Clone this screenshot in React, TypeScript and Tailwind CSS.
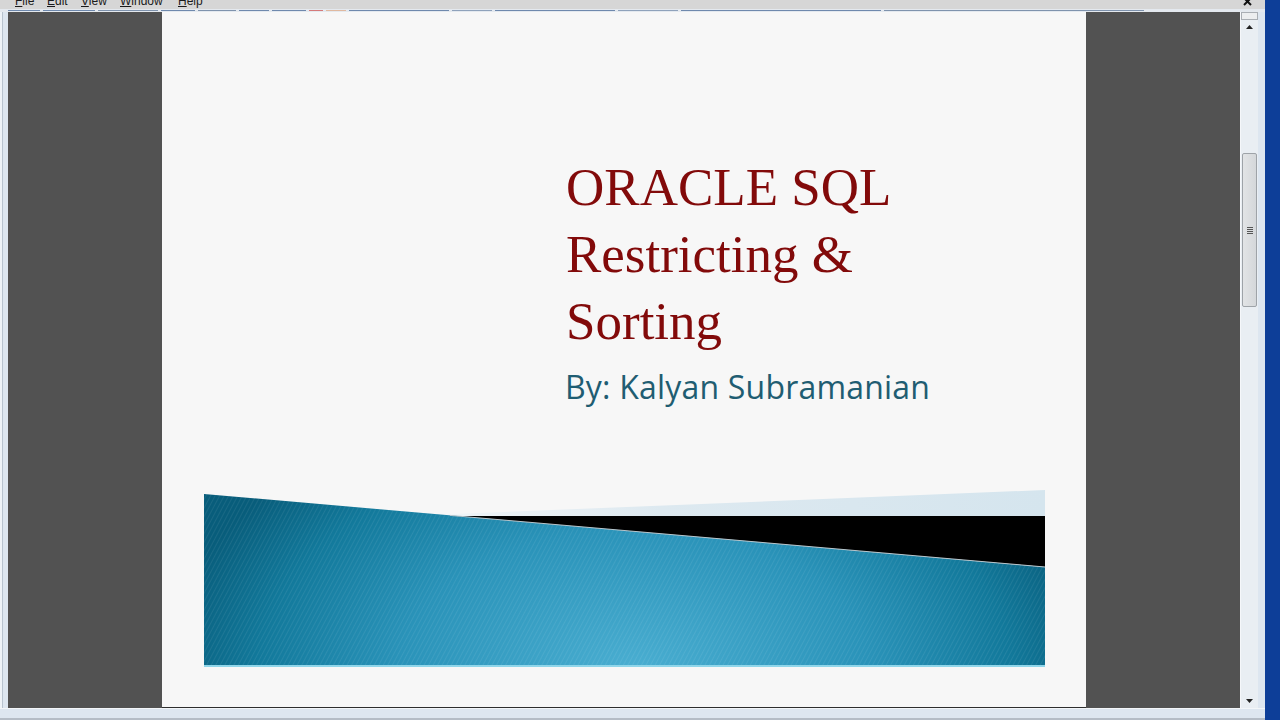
import React from "react";

function Banner() {
  return (
    <svg width="841" height="177" viewBox="0 0 841 177" className="block">
      <defs>
        <radialGradient
          id="teal"
          gradientUnits="userSpaceOnUse"
          cx="430"
          cy="180"
          r="470"
          gradientTransform="translate(430 180) scale(1 0.6) translate(-430 -180)"
        >
          <stop offset="0" stopColor="#4aaed1" />
          <stop offset="0.5" stopColor="#2a93b9" />
          <stop offset="0.8" stopColor="#12799b" />
          <stop offset="1" stopColor="#085d7b" />
        </radialGradient>
        <linearGradient id="lb" x1="0" y1="0" x2="1" y2="0">
          <stop offset="0" stopColor="#f4f7f9" />
          <stop offset="0.4" stopColor="#dde9f0" />
          <stop offset="1" stopColor="#d5e5ee" />
        </linearGradient>
        <pattern id="stripes" width="4" height="4" patternUnits="userSpaceOnUse" patternTransform="rotate(28)">
          <rect width="1" height="4" fill="#ffffff" opacity="0.07" />
        </pattern>
      </defs>
      <polygon points="200,26 841,0 841,26" fill="url(#lb)" />
      <polygon points="246,26 841,26 841,77" fill="#000000" />
      <polygon points="0,4 841,77 841,176 0,176" fill="url(#teal)" />
      <polygon points="0,4 841,77 841,176 0,176" fill="url(#stripes)" />
      <line x1="246" y1="25.4" x2="841" y2="77" stroke="#b9c6cc" strokeWidth="1" />
      <rect x="0" y="175" width="841" height="2" fill="#8fd6ea" />
    </svg>
  );
}

export default function App() {
  return (
    <div className="w-[1280px] h-[720px] flex overflow-hidden bg-[#dfe7f0]">
      {/* window */}
      <div className="w-[1265px] h-full flex flex-col">
        {/* menu bar */}
        <div className="h-[9px] bg-[#d6d6d6] flex overflow-hidden relative font-['Liberation_Sans',sans-serif] text-[12px] leading-[12px] text-[#1a1a1a]">
          <div className="flex mt-[-5px] pl-[15px]">
            <span className="w-[32px]"><span className="underline">F</span>ile</span>
            <span className="w-[34px]"><span className="underline">E</span>dit</span>
            <span className="w-[39px]"><span className="underline">V</span>iew</span>
            <span className="w-[58px]"><span className="underline">W</span>indow</span>
            <span><span className="underline">H</span>elp</span>
          </div>
          <svg className="absolute left-[1243px] top-[-3px]" width="9" height="9" viewBox="0 0 9 9">
            <path d="M1 1 L8 8 M8 1 L1 8" stroke="#111" strokeWidth="2" />
          </svg>
        </div>
        {/* toolbar strip */}
        <div className="h-[3px] bg-[#e4e9ef] flex items-start pl-[8px]">
          <div className="mt-[1px] h-[1px] w-full flex gap-[3px]">
            <div className="w-[32px] bg-[#6f89ad]" />
            <div className="w-[52px] bg-[#6f89ad]" />
            <div className="w-[60px] bg-[#7f93ad]" />
            <div className="w-[34px] bg-[#6f89ad]" />
            <div className="w-[38px] bg-[#7f93ad]" />
            <div className="w-[30px] bg-[#6f89ad]" />
            <div className="w-[34px] bg-[#6f89ad]" />
            <div className="w-[14px] bg-[#d57a7a]" />
            <div className="w-[20px] bg-[#e0b9a0]" />
            <div className="w-[100px] bg-[#6f89ad]" />
            <div className="w-[40px] bg-[#8fa2bb]" />
            <div className="w-[120px] bg-[#6f89ad]" />
            <div className="w-[60px] bg-[#8fa2bb]" />
            <div className="w-[200px] bg-[#6f89ad]" />
            <div className="w-[260px] bg-[#7f93ad]" />
          </div>
        </div>
        {/* main row */}
        <div className="h-[696px] flex">
          {/* left frame */}
          <div className="w-[8px] h-full flex">
            <div className="w-[2px] bg-[#eef3f8]" />
            <div className="w-[1px] bg-[#b8c3cf]" />
            <div className="flex-1 bg-[#dde6f0]" />
          </div>
          {/* document area */}
          <div className="w-[1232px] h-full bg-[#525252] flex justify-center">
            <div className="w-[924px] h-[695px] bg-[#f7f7f7] shadow-[0_1px_0_#2e2e2e] flex flex-col pt-[142px]">
              <div className="pl-[404px] font-['Liberation_Serif',serif] text-[53px] leading-[67px] text-[#820a0a]">
                <div>ORACLE SQL</div>
                <div>Restricting &amp;</div>
                <div>Sorting</div>
              </div>
              <div className="pl-[403px] mt-[16px] font-['Open_Sans',sans-serif] text-[32px] leading-[32px] tracking-[0.2px] text-[#1f5d72]">
                By: Kalyan Subramanian
              </div>
              <div className="ml-[42px] mt-[87px]">
                <Banner />
              </div>
            </div>
          </div>
          {/* scrollbar */}
          <div className="w-[18px] h-full bg-[#e9eef3] flex flex-col items-center border-l border-[#f5f7fa]">
            <div className="w-[17px] h-[8px] border border-[#a9aeb4] bg-[#eceef0]" />
            <div className="h-[14px] flex items-center justify-center">
              <svg width="7" height="4" viewBox="0 0 7 4"><polygon points="3.5,0 7,4 0,4" fill="#222" /></svg>
            </div>
            <div className="flex-1 w-full flex flex-col items-center pt-[119px]">
              <div className="w-[15px] h-[154px] border border-[#9ea3a8] rounded-[2px] bg-gradient-to-r from-[#e2e4e6] to-[#d4d7da] flex items-center justify-center">
                <div className="flex flex-col gap-[1px]">
                  <div className="w-[6px] h-[1px] bg-[#555]" />
                  <div className="w-[6px] h-[1px] bg-[#555]" />
                  <div className="w-[6px] h-[1px] bg-[#555]" />
                  <div className="w-[6px] h-[1px] bg-[#555]" />
                </div>
              </div>
            </div>
            <div className="h-[14px] flex items-center justify-center">
              <svg width="7" height="4" viewBox="0 0 7 4"><polygon points="0,0 7,0 3.5,4" fill="#222" /></svg>
            </div>
          </div>
          {/* right frame */}
          <div className="w-[7px] h-full bg-[#dde6f0]" />
        </div>
        {/* bottom frame */}
        <div className="h-[12px] flex flex-col">
          <div className="h-[10px] bg-[#dde6f0] border-t border-[#f3f6f9]" />
          <div className="h-[2px] bg-[#b4bcc6]" />
        </div>
      </div>
      {/* desktop */}
      <div className="w-[15px] h-full bg-[#0d3e98]" />
    </div>
  );
}
